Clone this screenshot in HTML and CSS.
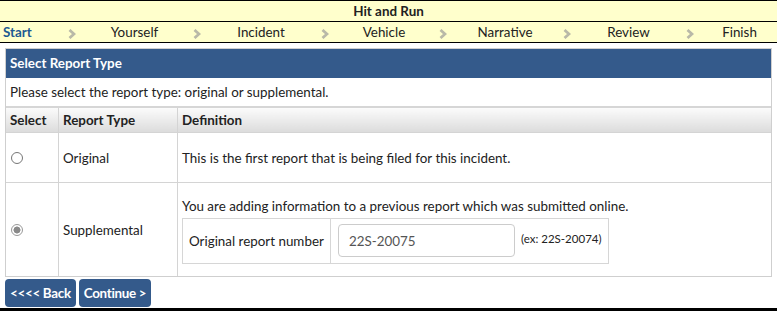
FILE: index.html
```html
<!DOCTYPE html>
<html lang="en">
<head>
	<meta charset="UTF-8">
	<title>Hit and Run</title>
	<link rel="stylesheet" href="styles.css">
</head>
<body>
	<div class="title-bar">Hit and Run</div>
	<div class="steps">
		<span class="step current">Start</span>
		<span class="arrow"><svg width="8" height="10" viewBox="0 0 8 10"><polyline points="1.5,1 6,5 1.5,9" /></svg></span>
		<span class="step">Yourself</span>
		<span class="arrow"><svg width="8" height="10" viewBox="0 0 8 10"><polyline points="1.5,1 6,5 1.5,9" /></svg></span>
		<span class="step">Incident</span>
		<span class="arrow"><svg width="8" height="10" viewBox="0 0 8 10"><polyline points="1.5,1 6,5 1.5,9" /></svg></span>
		<span class="step">Vehicle</span>
		<span class="arrow"><svg width="8" height="10" viewBox="0 0 8 10"><polyline points="1.5,1 6,5 1.5,9" /></svg></span>
		<span class="step">Narrative</span>
		<span class="arrow"><svg width="8" height="10" viewBox="0 0 8 10"><polyline points="1.5,1 6,5 1.5,9" /></svg></span>
		<span class="step">Review</span>
		<span class="arrow"><svg width="8" height="10" viewBox="0 0 8 10"><polyline points="1.5,1 6,5 1.5,9" /></svg></span>
		<span class="step">Finish</span>
	</div>

	<div class="panel">
		<div class="panel-head">Select Report Type</div>
		<div class="panel-intro">Please select the report type: original or supplemental.</div>
		<table class="types">
			<thead>
				<tr>
					<th class="col-select">Select</th>
					<th class="col-type">Report Type</th>
					<th>Definition</th>
				</tr>
			</thead>
			<tbody>
				<tr class="row-original">
					<td><span class="radio"></span></td>
					<td>Original</td>
					<td>This is the first report that is being filed for this incident.</td>
				</tr>
				<tr class="row-supp">
					<td><span class="radio checked"></span></td>
					<td>Supplemental</td>
					<td>
						<div class="supp-text">You are adding information to a previous report which was submitted online.</div>
						<table class="orig-number">
							<tr>
								<td class="label">Original report number</td>
								<td class="field"><input type="text" value="22S-20075"></td>
								<td class="hint">(ex: 22S-20074)</td>
							</tr>
						</table>
					</td>
				</tr>
			</tbody>
		</table>
	</div>

	<div class="buttons">
		<button class="btn">&lt;&lt;&lt;&lt; Back</button>
		<button class="btn">Continue &gt;</button>
	</div>
	<div class="footer"></div>
</body>
</html>
```

FILE: styles.css
```css
body {
	margin: 0;
	font-family: Lato, 'Open Sans', sans-serif;
	font-size: 13.4px;
	color: #222;
	background: #fff;
}

.title-bar {
	border-top: 1px solid #000;
	border-bottom: 1px solid #000;
	background-color: #ffffcc;
	height: 20px;
	line-height: 20px;
	text-align: center;
	font-weight: bold;
}

.steps {
	display: grid;
	grid-template-columns: 60px 24px 101px 24px 104px 24px 94px 24px 100px 24px 99px 24px 1fr;
	background-color: #ffffcc;
	height: 20px;
	line-height: 20px;
	border-bottom: 1px solid #000;
}

.step {
	text-align: center;
}

.step.current {
	text-align: left;
	padding-left: 3px;
	color: #1d5a92;
	font-weight: bold;
}

.arrow {
	display: flex;
	align-items: center;
	justify-content: center;
	padding-top: 3px;
}

.arrow polyline {
	fill: none;
	stroke: #b9b9a8;
	stroke-width: 2.8;
}

.panel {
	margin: 5px 5px 0 5px;
	border: 1px solid #cfcfcf;
}

.panel-head {
	background-color: #345a8b;
	color: #fff;
	font-weight: bold;
	height: 29px;
	line-height: 29px;
	padding-left: 4px;
}

.panel-intro {
	height: 28px;
	line-height: 28px;
	padding-left: 4px;
	border-bottom: 2px solid #d6d6d6;
}

.types {
	width: 100%;
	border-collapse: collapse;
}

.types th {
	text-align: left;
	font-weight: bold;
	height: 24px;
	padding: 0 4px;
	background: linear-gradient(#fbfbfb, #dcdcdc);
	border-left: 1px solid #d4d4d4;
	border-bottom: 1px solid #d4d4d4;
}

.types th:first-child,
.types > tbody > tr > td:first-child {
	border-left: none;
}

.col-select {
	width: 44px;
}

.col-type {
	width: 110px;
}

.types > tbody > tr > td {
	border-left: 1px solid #d4d4d4;
	border-top: 1px solid #d4d4d4;
	padding: 1px 4px 0 4px;
	vertical-align: middle;
}

.row-original td {
	height: 48px;
}

.row-supp > td {
	height: 92px;
}

.radio {
	display: block;
	width: 12px;
	height: 12px;
	margin-left: 1px;
	border: 1px solid #767676;
	border-radius: 50%;
	background: #fff;
	box-sizing: border-box;
}

.radio.checked {
	border-color: #999;
	background: radial-gradient(circle, #8a8a8a 3.2px, #fff 3.8px);
}

.supp-text {
	margin: 2px 0 4px 0;
}

.orig-number {
	border-collapse: collapse;
	border: 1px solid #d6d6d6;
}

.orig-number td {
	border-left: 1px solid #d6d6d6;
	height: 38px;
	padding: 0 6px;
	white-space: nowrap;
}

.orig-number .label {
	border-left: none;
	width: 135px;
}

.orig-number .field {
	padding: 0 0 0 7px;
}

.orig-number input {
	width: 177px;
	height: 33px;
	box-sizing: border-box;
	border: 1px solid #ccc;
	border-radius: 4px;
	padding: 0 10px;
	font-family: Lato, 'Open Sans', sans-serif;
	font-size: 13.4px;
	color: #555;
	display: block;
	margin-bottom: 1px;
}

.orig-number .hint {
	border-left: none;
	font-size: 11.5px;
	padding-bottom: 6px;
}

.buttons {
	display: flex;
	gap: 3px;
	padding: 2px 5px 0 5px;
}

.btn {
	background-color: #345a8b;
	color: #fff;
	border: none;
	border-radius: 4px;
	height: 28px;
	padding: 0 5px;
	font-family: Lato, 'Open Sans', sans-serif;
	font-size: 13.4px;
	font-weight: bold;
	letter-spacing: -0.3px;
	cursor: pointer;
}

.footer {
	margin-top: 1px;
	height: 6px;
	background-color: #000;
}
```
